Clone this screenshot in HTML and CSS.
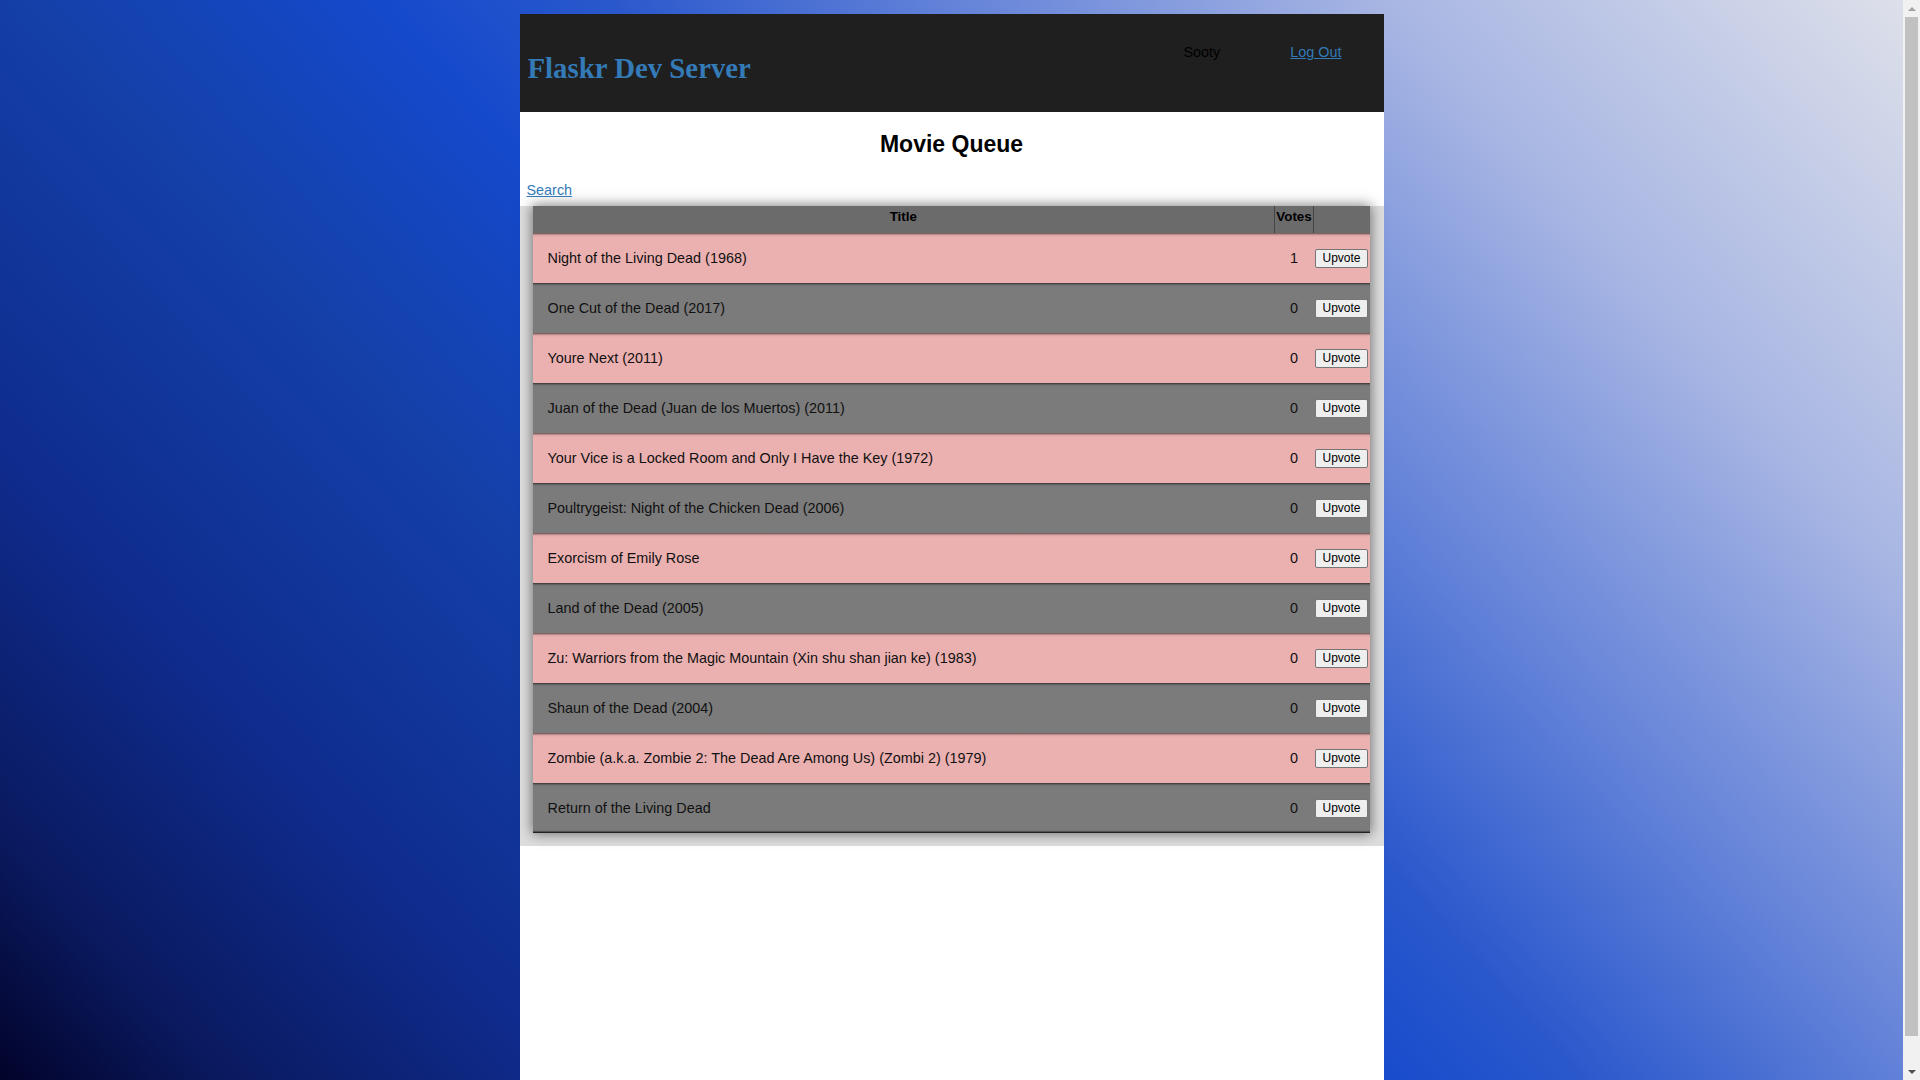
FILE: index.html
```html
<!DOCTYPE html>
<html lang="en">
<head>
<meta charset="utf-8">
<title>Movie Queue - Flaskr Dev Server</title>
<link rel="stylesheet" href="styles.css">
</head>
<body>
<div class="viewport">
  <div class="page">
    <header class="topbar">
      <h1 class="brand">Flaskr Dev Server</h1>
      <nav class="user-nav">
        <span class="user">Sooty</span>
        <a href="#" class="link">Log Out</a>
      </nav>
    </header>
    <section class="content">
      <h2 class="page-title">Movie Queue</h2>
      <p class="search"><a href="#" class="link">Search</a></p>
      <div class="queue">
        <table class="movies">
          <colgroup><col><col class="c-votes"><col class="c-btn"></colgroup>
          <thead>
            <tr><th>Title</th><th class="votes-h">Votes</th><th></th></tr>
          </thead>
          <tbody>
            <tr><td class="title">Night of the Living Dead (1968)</td><td class="num">1</td><td class="act"><button class="upvote">Upvote</button></td></tr>
            <tr><td class="title">One Cut of the Dead (2017)</td><td class="num">0</td><td class="act"><button class="upvote">Upvote</button></td></tr>
            <tr><td class="title">Youre Next (2011)</td><td class="num">0</td><td class="act"><button class="upvote">Upvote</button></td></tr>
            <tr><td class="title">Juan of the Dead (Juan de los Muertos) (2011)</td><td class="num">0</td><td class="act"><button class="upvote">Upvote</button></td></tr>
            <tr><td class="title">Your Vice is a Locked Room and Only I Have the Key (1972)</td><td class="num">0</td><td class="act"><button class="upvote">Upvote</button></td></tr>
            <tr><td class="title">Poultrygeist: Night of the Chicken Dead (2006)</td><td class="num">0</td><td class="act"><button class="upvote">Upvote</button></td></tr>
            <tr><td class="title">Exorcism of Emily Rose</td><td class="num">0</td><td class="act"><button class="upvote">Upvote</button></td></tr>
            <tr><td class="title">Land of the Dead (2005)</td><td class="num">0</td><td class="act"><button class="upvote">Upvote</button></td></tr>
            <tr><td class="title">Zu: Warriors from the Magic Mountain (Xin shu shan jian ke) (1983)</td><td class="num">0</td><td class="act"><button class="upvote">Upvote</button></td></tr>
            <tr><td class="title">Shaun of the Dead (2004)</td><td class="num">0</td><td class="act"><button class="upvote">Upvote</button></td></tr>
            <tr><td class="title">Zombie (a.k.a. Zombie 2: The Dead Are Among Us) (Zombi 2) (1979)</td><td class="num">0</td><td class="act"><button class="upvote">Upvote</button></td></tr>
            <tr><td class="title">Return of the Living Dead</td><td class="num">0</td><td class="act"><button class="upvote">Upvote</button></td></tr>
          </tbody>
        </table>
      </div>
    </section>
  </div>
</div>
<div class="scrollbar" aria-hidden="true">
  <div class="sb-btn"><svg width="8" height="4" viewBox="0 0 8 4"><path d="M0 4 L4 0 L8 4 Z" fill="#a3a3a3"/></svg></div>
  <div class="sb-track"><div class="sb-thumb"></div></div>
  <div class="sb-btn"><svg width="8" height="4" viewBox="0 0 8 4"><path d="M0 0 L8 0 L4 4 Z" fill="#505050"/></svg></div>
</div>
</body>
</html>
```

FILE: styles.css
```css
html, body {
  height: 100%;
}

body {
  margin: 0;
  display: flex;
  overflow: hidden;
  font-family: "Liberation Sans", Arial, sans-serif;
  font-size: 14.4px;
  color: #000;
}

.viewport {
  flex: 1;
  min-width: 0;
  height: 100vh;
  overflow: hidden;
  background: linear-gradient(48deg, #02032a 0%, #0a1a60 8%, #0f2c8e 20%, #1440a8 35%, #1549cc 47%, #2a58cc 55%, #6080d8 66%, #a8b6e3 82%, #dde0ea 100%);
}

.scrollbar {
  width: 17px;
  flex: none;
  height: 100vh;
  background: #f1f1f1;
  display: flex;
  flex-direction: column;
}

.sb-btn {
  height: 17px;
  flex: none;
  display: flex;
  align-items: center;
  justify-content: center;
}

.sb-btn svg {
  display: block;
}

.sb-track {
  flex: 1;
  padding: 0 2px;
}

.sb-thumb {
  height: 1019px;
  background: #c1c1c1;
}

.page {
  width: 864px;
  margin: 14px auto 0;
  background: #fff;
  min-height: 1094px;
}

.topbar {
  height: 98px;
  background: #1f1f1f;
  display: flex;
  justify-content: space-between;
  align-items: flex-start;
}

.brand {
  margin: 38px 0 0 8px;
  font-family: "Liberation Serif", "Times New Roman", serif;
  font-size: 28.8px;
  font-weight: bold;
  line-height: normal;
  color: #337ab7;
}

.user-nav {
  display: flex;
  gap: 70px;
  margin: 30px 42px 0 0;
  line-height: normal;
}

.user {
  color: #000;
}

.link {
  color: #337ab7;
  text-decoration: underline;
}

.page-title {
  margin: 19px 0 0;
  font-size: 23px;
  line-height: 26px;
  font-weight: bold;
  text-align: center;
}

.search {
  margin: 25px 0 0;
  padding-left: 7px;
  line-height: 17px;
}

.queue {
  margin-top: 7px;
  padding: 0 14px 13px 13px;
  background: #dedede;
}

.movies {
  width: 100%;
  border-collapse: collapse;
  table-layout: fixed;
  box-shadow: 0 0 12px 1px rgba(0, 0, 0, 0.5);
}

.c-votes { width: 39px; }
.c-btn { width: 56px; }

.movies th {
  height: 24px;
  padding: 3px 0 0;
  vertical-align: top;
  background: #6b6b6b;
  font-size: 13.33px;
  font-weight: bold;
  color: #000;
  text-align: center;
}

.movies th.votes-h {
  border-left: 1px solid #444;
  border-right: 1px solid #444;
}

.movies td {
  height: 50px;
  padding: 0;
  vertical-align: middle;
  color: #111;
  background-image: linear-gradient(to bottom, rgba(0, 0, 0, 0.55) 0, rgba(0, 0, 0, 0.35) 1px, rgba(0, 0, 0, 0.08) 2px, rgba(0, 0, 0, 0) 4px);
}

.movies tbody tr:nth-child(odd) td { background-color: #ebb0b0; }
.movies tbody tr:nth-child(even) td { background-color: #7b7b7b; }

.movies tbody tr:last-child td {
  background-image:
    linear-gradient(to bottom, rgba(0, 0, 0, 0.55) 0, rgba(0, 0, 0, 0.35) 1px, rgba(0, 0, 0, 0.08) 2px, rgba(0, 0, 0, 0) 4px),
    linear-gradient(to top, rgba(0, 0, 0, 0.85) 0, rgba(0, 0, 0, 0.6) 1px, rgba(0, 0, 0, 0.1) 2px, rgba(0, 0, 0, 0) 3px);
}

.movies td.title {
  padding-left: 15px;
  white-space: nowrap;
}

.movies td.num {
  text-align: center;
}

.movies td.act {
  text-align: center;
}

.upvote {
  font-family: "Liberation Sans", Arial, sans-serif;
  font-size: 12px;
  line-height: 13px;
  padding: 2px 6px;
  border: 1px solid #767676;
  border-radius: 2px;
  background: #efefef;
  color: #000;
  margin: 0;
}
```
